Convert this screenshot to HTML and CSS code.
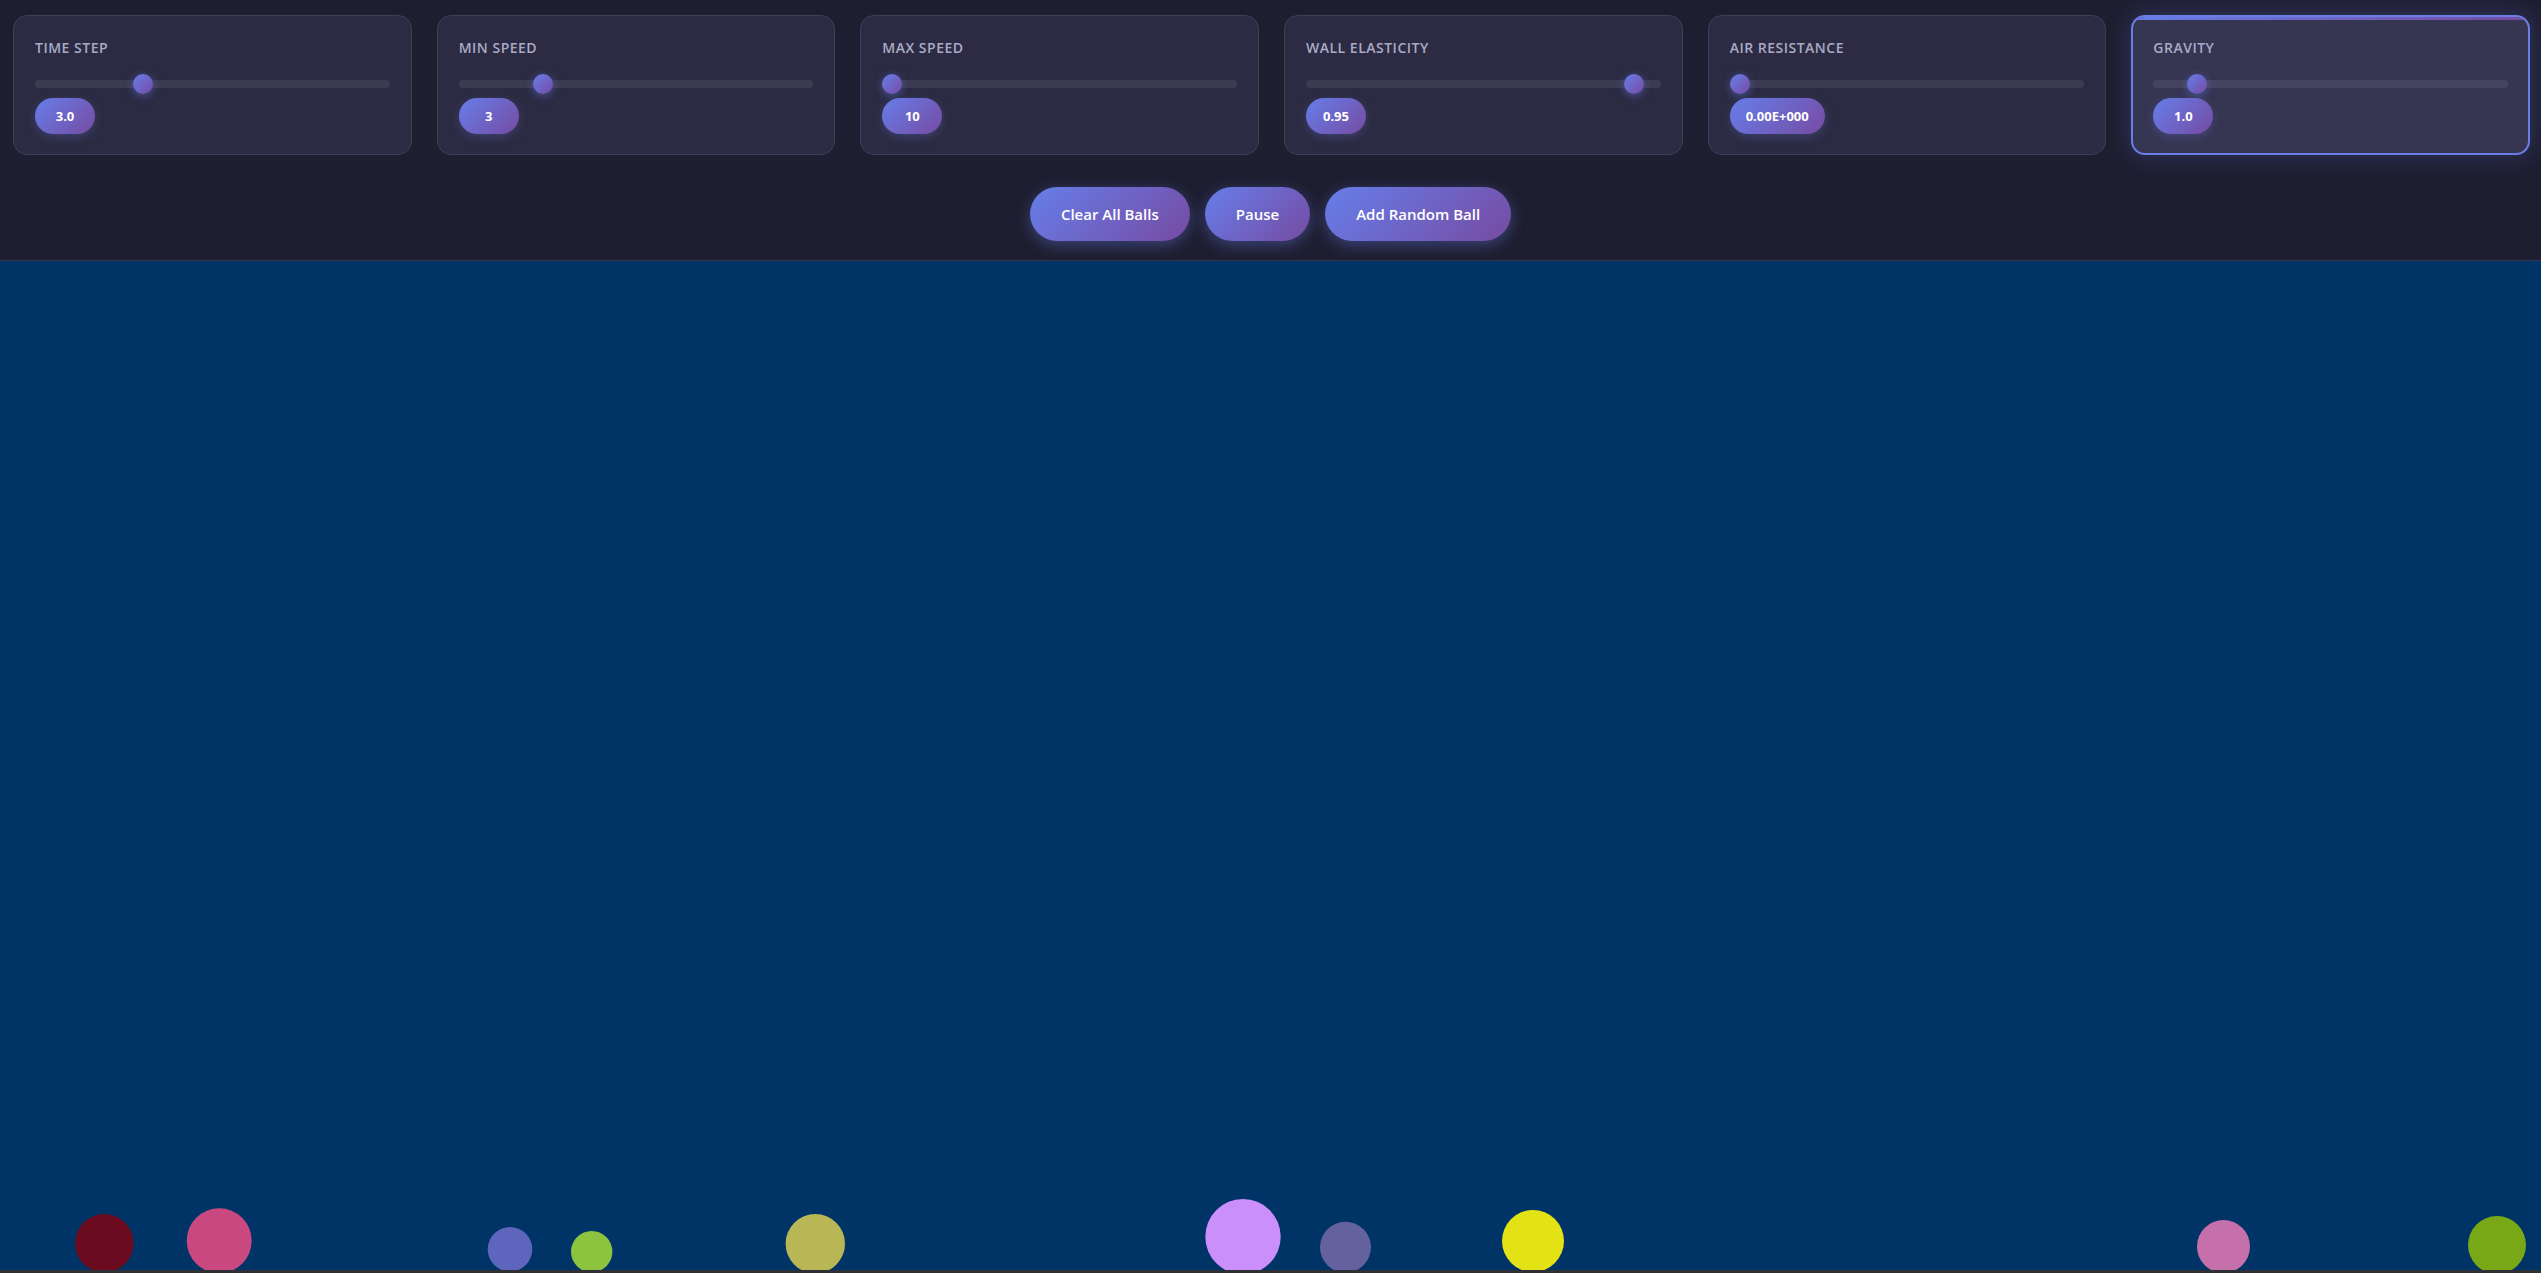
FILE: index.html
```html
<!DOCTYPE html>
<html lang="en">
<head>
<meta charset="utf-8">
<title>Ball Physics Simulation</title>
<link rel="stylesheet" href="styles.css">
</head>
<body>
<header class="controls">
  <div class="grid">
    <div class="card">
      <label class="label" for="timeStep">Time Step</label>
      <input class="range" id="timeStep" type="range" min="0.1" max="10" step="0.1" value="3">
      <span class="badge">3.0</span>
    </div>
    <div class="card">
      <label class="label" for="minSpeed">Min Speed</label>
      <input class="range" id="minSpeed" type="range" min="1" max="10" step="1" value="3">
      <span class="badge">3</span>
    </div>
    <div class="card">
      <label class="label" for="maxSpeed">Max Speed</label>
      <input class="range" id="maxSpeed" type="range" min="10" max="100" step="1" value="10">
      <span class="badge">10</span>
    </div>
    <div class="card">
      <label class="label" for="elasticity">Wall Elasticity</label>
      <input class="range" id="elasticity" type="range" min="0" max="1" step="0.01" value="0.95">
      <span class="badge">0.95</span>
    </div>
    <div class="card">
      <label class="label" for="air">Air Resistance</label>
      <input class="range" id="air" type="range" min="0" max="0.01" step="0.0001" value="0">
      <span class="badge">0.00E+000</span>
    </div>
    <div class="card card-active">
      <label class="label" for="gravity">Gravity</label>
      <input class="range" id="gravity" type="range" min="0" max="10" step="0.1" value="1">
      <span class="badge">1.0</span>
    </div>
  </div>
  <div class="actions">
    <button class="btn" type="button">Clear All Balls</button>
    <button class="btn" type="button">Pause</button>
    <button class="btn" type="button">Add Random Ball</button>
  </div>
</header>
<main class="stage">
  <svg class="sim" viewBox="0 0 2541 1009" preserveAspectRatio="none" aria-label="simulation canvas">
    <circle cx="104.3" cy="982.3" r="29.3" fill="#6b0b20"/>
    <circle cx="219.2" cy="979.8" r="32.5" fill="#c8487f"/>
    <circle cx="510" cy="988.3" r="22.3" fill="#5d65bd"/>
    <circle cx="591.7" cy="990.7" r="20.7" fill="#8cc43f"/>
    <circle cx="815.3" cy="982.7" r="29.7" fill="#b8b655"/>
    <circle cx="1243" cy="975.7" r="37.7" fill="#cb8ffc"/>
    <circle cx="1345.5" cy="986.2" r="25.5" fill="#63629f"/>
    <circle cx="1533" cy="980" r="31" fill="#e3e215"/>
    <circle cx="2223.5" cy="985.5" r="26.5" fill="#c56fab"/>
    <circle cx="2497" cy="984" r="29" fill="#78a816"/>
  </svg>
</main>
</body>
</html>
```
FILE: styles.css
```css
* { box-sizing: border-box; }

html, body {
  margin: 0;
  padding: 0;
}

body {
  background: #2f2f36;
  font-family: "Open Sans", "Noto Sans", "Liberation Sans", sans-serif;
  color: #fff;
  overflow: hidden;
}

.controls {
  background: #1e1e30;
  padding: 15px 11px 19px 13px;
  border-bottom: 1px solid #35354a;
}

.grid {
  display: grid;
  grid-template-columns: repeat(6, 1fr);
  gap: 25px;
}

.card {
  position: relative;
  display: flex;
  flex-direction: column;
  align-items: flex-start;
  height: 140px;
  padding: 22px 21px 20px;
  background: #2c2b43;
  border: 1px solid #403f57;
  border-radius: 14px;
  overflow: hidden;
}

.card-active {
  background: #363552;
  border: 2px solid #6a7ee6;
  padding: 21px 20px 19px;
  box-shadow: 0 0 26px rgba(102, 126, 234, 0.28);
}

.card-active::before {
  content: "";
  position: absolute;
  top: 0;
  left: 0;
  right: 0;
  height: 3px;
  background: linear-gradient(90deg, #667eea, #764ba2);
}

.label {
  font-size: 14px;
  line-height: 19px;
  font-weight: 600;
  letter-spacing: 0.5px;
  text-transform: uppercase;
  color: #a9abc6;
}

.range {
  -webkit-appearance: none;
  appearance: none;
  display: block;
  width: 100%;
  height: 20px;
  margin: 17px 0 4px;
  padding: 0;
  background: transparent;
  outline: none;
}

.range::-webkit-slider-runnable-track {
  height: 8px;
  border-radius: 4px;
  background: #3c3b52;
}

.card-active .range::-webkit-slider-runnable-track {
  background: #454460;
}

.range::-webkit-slider-thumb {
  -webkit-appearance: none;
  appearance: none;
  width: 20px;
  height: 20px;
  margin-top: -6px;
  border-radius: 50%;
  background: linear-gradient(135deg, #667eea, #764ba2);
  box-shadow: 0 2px 9px rgba(102, 126, 234, 0.5);
  border: none;
}

.badge {
  display: inline-flex;
  align-items: center;
  justify-content: center;
  min-width: 60px;
  height: 36px;
  padding: 0 16px;
  border-radius: 18px;
  background: linear-gradient(135deg, #667eea, #764ba2);
  box-shadow: 0 3px 10px rgba(102, 126, 234, 0.25);
  font-size: 13px;
  font-weight: 700;
  color: #fff;
}

.actions {
  display: flex;
  justify-content: center;
  gap: 15px;
  margin: 32px 2px 0 0;
}

.btn {
  height: 54px;
  padding: 0 31px;
  border: none;
  border-radius: 27px;
  background: linear-gradient(135deg, #667eea, #764ba2);
  box-shadow: 0 4px 15px rgba(102, 126, 234, 0.4);
  font-family: "Open Sans", "Noto Sans", "Liberation Sans", sans-serif;
  font-size: 15px;
  font-weight: 600;
  color: #fff;
  cursor: pointer;
}

.stage {
  background: #003366;
}

.sim {
  display: block;
  width: 100%;
  height: 1009px;
}
```
